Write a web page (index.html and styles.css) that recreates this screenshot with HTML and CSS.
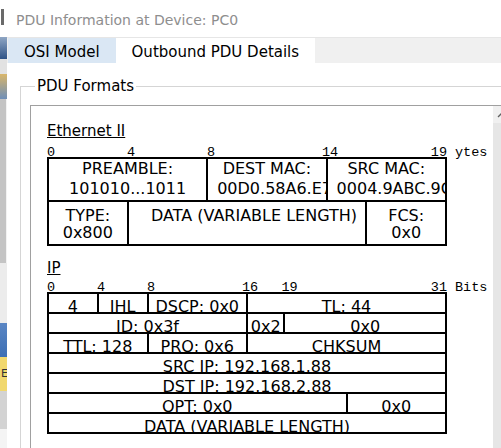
FILE: index.html
```html
<!DOCTYPE html>
<html lang="en">
<head>
    <meta charset="UTF-8">
    <meta name="viewport" content="width=device-width, initial-scale=1.0">
    <title>PDU Information at Device: PC0</title>
    <link rel="stylesheet" href="styles.css">
</head>
<body>
    <div class="screen">
        <!-- edge of the window behind -->
        <div class="backdrop">
            <span class="bd bd-white"></span>
            <span class="bd bd-glyph"></span>
            <span class="bd bd-gap"></span>
            <span class="bd bd-icon"></span>
            <span class="bd bd-light"></span>
            <span class="bd bd-pencil"></span>
            <span class="bd bd-track"></span>
            <span class="bd bd-pale"></span>
            <span class="bd bd-photo"></span>
            <span class="bd bd-note">E</span>
            <span class="bd bd-grey"></span>
            <span class="bd bd-end"></span>
        </div>

        <div class="window">
            <div class="titlebar">PDU Information at Device: PC0</div>

            <div class="tabs">
                <div class="tab osi">OSI Model</div>
                <div class="tab active">Outbound PDU Details</div>
            </div>

            <div class="panel">
                <fieldset class="group">
                    <legend>PDU Formats</legend>
                    <div class="scroll">
                        <div class="scroll-body">

                            <section class="pdu eth">
                                <div class="pdu-name">Ethernet II</div>
                                <div class="ruler">
                                    <span class="b0">0</span>
                                    <span class="b4">4</span>
                                    <span class="b8">8</span>
                                    <span class="b14">14</span>
                                    <span class="b19">19</span>
                                    <span class="unit">ytes</span>
                                </div>
                                <div class="frame">
                                    <div class="cell s8">
                                        <div>PREAMBLE:</div>
                                        <div>101010...1011</div>
                                    </div>
                                    <div class="cell s6">
                                        <div>DEST MAC:</div>
                                        <div class="clip">00D0.58A6.E7</div>
                                    </div>
                                    <div class="cell s6">
                                        <div>SRC MAC:</div>
                                        <div class="clip">0004.9ABC.9C</div>
                                    </div>
                                    <div class="cell s4 low">
                                        <div>TYPE:</div>
                                        <div>0x800</div>
                                    </div>
                                    <div class="cell s12 low data">
                                        <div>DATA (VARIABLE LENGTH)</div>
                                    </div>
                                    <div class="cell s4 low">
                                        <div>FCS:</div>
                                        <div>0x0</div>
                                    </div>
                                </div>
                            </section>

                            <section class="pdu ip">
                                <div class="pdu-name">IP</div>
                                <div class="ruler">
                                    <span class="b0">0</span>
                                    <span class="b4">4</span>
                                    <span class="b8">8</span>
                                    <span class="b16">16</span>
                                    <span class="b19">19</span>
                                    <span class="b31">31</span>
                                    <span class="unit">Bits</span>
                                </div>
                                <div class="frame">
                                    <div class="cell s4">4</div>
                                    <div class="cell s4">IHL</div>
                                    <div class="cell s8">DSCP: 0x0</div>
                                    <div class="cell s16">TL: 44</div>

                                    <div class="cell s16">ID: 0x3f</div>
                                    <div class="cell s3">0x2</div>
                                    <div class="cell s13">0x0</div>

                                    <div class="cell s8">TTL: 128</div>
                                    <div class="cell s8">PRO: 0x6</div>
                                    <div class="cell s16">CHKSUM</div>

                                    <div class="cell s32">SRC IP: 192.168.1.88</div>
                                    <div class="cell s32">DST IP: 192.168.2.88</div>

                                    <div class="cell s24">OPT: 0x0</div>
                                    <div class="cell s8">0x0</div>

                                    <div class="cell s32">DATA (VARIABLE LENGTH)</div>
                                </div>
                            </section>

                        </div>
                        <div class="scrollbar">
                            <div class="scroll-up">
                                <svg width="9" height="6" viewBox="0 0 9 6">
                                    <path d="M1 5 L4.5 1.5 L8 5" fill="none" stroke="#606060" stroke-width="1.3"/>
                                </svg>
                            </div>
                        </div>
                    </div>
                </fieldset>
            </div>
        </div>
    </div>
</body>
</html>
```

FILE: styles.css
```css
* {
  box-sizing: border-box;
}

body {
  margin: 0;
  background: #fff;
  color: #000;
  font-family: "DejaVu Sans", sans-serif;
}

.screen {
  display: flex;
  align-items: flex-start;
  width: 501px;
  height: 448px;
  overflow: hidden;
}

/* strip of the window behind */
.backdrop {
  flex: none;
  width: 7px;
  display: flex;
  flex-direction: column;
}

.bd {
  display: block;
  flex: none;
}

.bd-white { height: 9px; background: #fff; }
.bd-glyph { height: 16px; background: linear-gradient(to right, #fff 1px, #6a6a6a 1px, #6a6a6a 4px, #fff 4px); }
.bd-gap { height: 12px; background: #fff; }
.bd-icon { height: 22px; background: linear-gradient(#8fa6c4, #2f5386); }
.bd-light { height: 15px; background: #e2e2e2; }
.bd-pencil { height: 25px; background: linear-gradient(#d9b66a, #6f8fb8); }
.bd-track { height: 164px; background: linear-gradient(to right, #c4c4c4 6px, #f2f2f2 6px); }
.bd-pale { height: 60px; background: #ececec; }
.bd-photo { height: 34px; background: linear-gradient(#5a86c4, #3d6fb4); }
.bd-note {
  height: 34px;
  background: #f1d86e;
  font-size: 11px;
  line-height: 34px;
  color: #333;
  text-indent: 1px;
  overflow: hidden;
}
.bd-grey { height: 38px; background: #d3d3d3; }
.bd-end { height: 19px; background: #f4f4f4; }

.window {
  flex: none;
  width: 540px;
}

.titlebar {
  height: 37px;
  padding: 12px 0 0 9px;
  font-size: 14px;
  line-height: 17px;
  color: #8e8e8e;
  white-space: nowrap;
}

.tabs {
  display: flex;
  height: 26px;
  padding-left: 1px;
  border-top: 1px solid #e6e6e6;
  background: #f0f0f0;
  font-size: 15px;
}

.tab {
  padding: 3px 16px 0;
  line-height: 22px;
  white-space: nowrap;
}

.tab.osi {
  background: #dae7f4;
}

.tab.active {
  background: #fff;
}

.panel {
  padding: 14px 0 0 13px;
}

.group {
  margin: 0;
  padding: 0 0 0 9px;
  min-width: 0;
  border: 1px solid #d5d5d5;
}

.group legend {
  margin-left: 5px;
  padding: 0 2px;
  font-size: 15px;
  line-height: 18px;
}

.scroll {
  display: flex;
  margin-top: 10px;
  border-top: 1px solid #a0a0a0;
  border-left: 1px solid #a0a0a0;
}

.scroll-body {
  flex: none;
  width: 462px;
  height: 360px;
  padding: 16px 0 0 16px;
}

.scrollbar {
  flex: none;
  width: 17px;
  background: #e6e6e6;
}

.scroll-up {
  height: 17px;
  display: flex;
  align-items: center;
  justify-content: center;
  background: #f0f0f0;
}

.pdu-name {
  font-size: 15px;
  line-height: 18px;
  text-decoration: underline;
}

.ip {
  margin-top: 13px;
}

/* bit / byte ruler over each frame */
.ruler {
  display: grid;
  height: 10px;
  font-family: "Liberation Mono", monospace;
  font-size: 13.5px;
  line-height: 11px;
  white-space: nowrap;
}

.eth .ruler {
  grid-template-columns: repeat(20, 20px) auto;
  margin-top: 7px;
}

.ip .ruler {
  grid-template-columns: repeat(32, 12.5px) auto;
  margin-top: 5px;
}

.ruler span {
  grid-row: 1;
}

.ruler .b0 { grid-column: 1; }
.ruler .b4 { grid-column: 5; }
.ruler .b8 { grid-column: 9; }
.ruler .b14 { grid-column: 15; margin-left: -5px; }
.ruler .b16 { grid-column: 17; margin-left: -5px; }
.ip .ruler .b19 { grid-column: 20; margin-left: -3px; }
.eth .ruler .b19 { grid-column: 20; justify-self: end; }
.ruler .b31 { grid-column: 32; justify-self: end; }

.ruler .unit {
  padding-left: 8px;
}

.eth .ruler .unit { grid-column: 21; }
.ip .ruler .unit { grid-column: 33; }

/* the boxes: black background shows through the gaps as lines */
.frame {
  display: grid;
  width: 400px;
  gap: 2px;
  padding: 2px;
  background: #000;
  font-size: 16px;
}

.eth .frame {
  grid-template-columns: repeat(20, minmax(0, 1fr));
  grid-template-rows: 41px 42px;
  line-height: 19.5px;
}

.ip .frame {
  grid-template-columns: repeat(32, minmax(0, 1fr));
  grid-auto-rows: 18px;
  line-height: 25px;
}

.cell {
  background: #fff;
  text-align: center;
  white-space: nowrap;
  overflow: hidden;
}

.cell.low {
  padding-top: 4.5px;
  line-height: 17.4px;
}

.cell.data {
  padding-left: 14px;
}

.cell .clip {
  text-align: left;
  padding-left: 9px;
}

.s3 { grid-column: span 3; }
.s4 { grid-column: span 4; }
.s6 { grid-column: span 6; }
.s8 { grid-column: span 8; }
.s12 { grid-column: span 12; }
.s13 { grid-column: span 13; }
.s16 { grid-column: span 16; }
.s24 { grid-column: span 24; }
.s32 { grid-column: span 32; }
```
